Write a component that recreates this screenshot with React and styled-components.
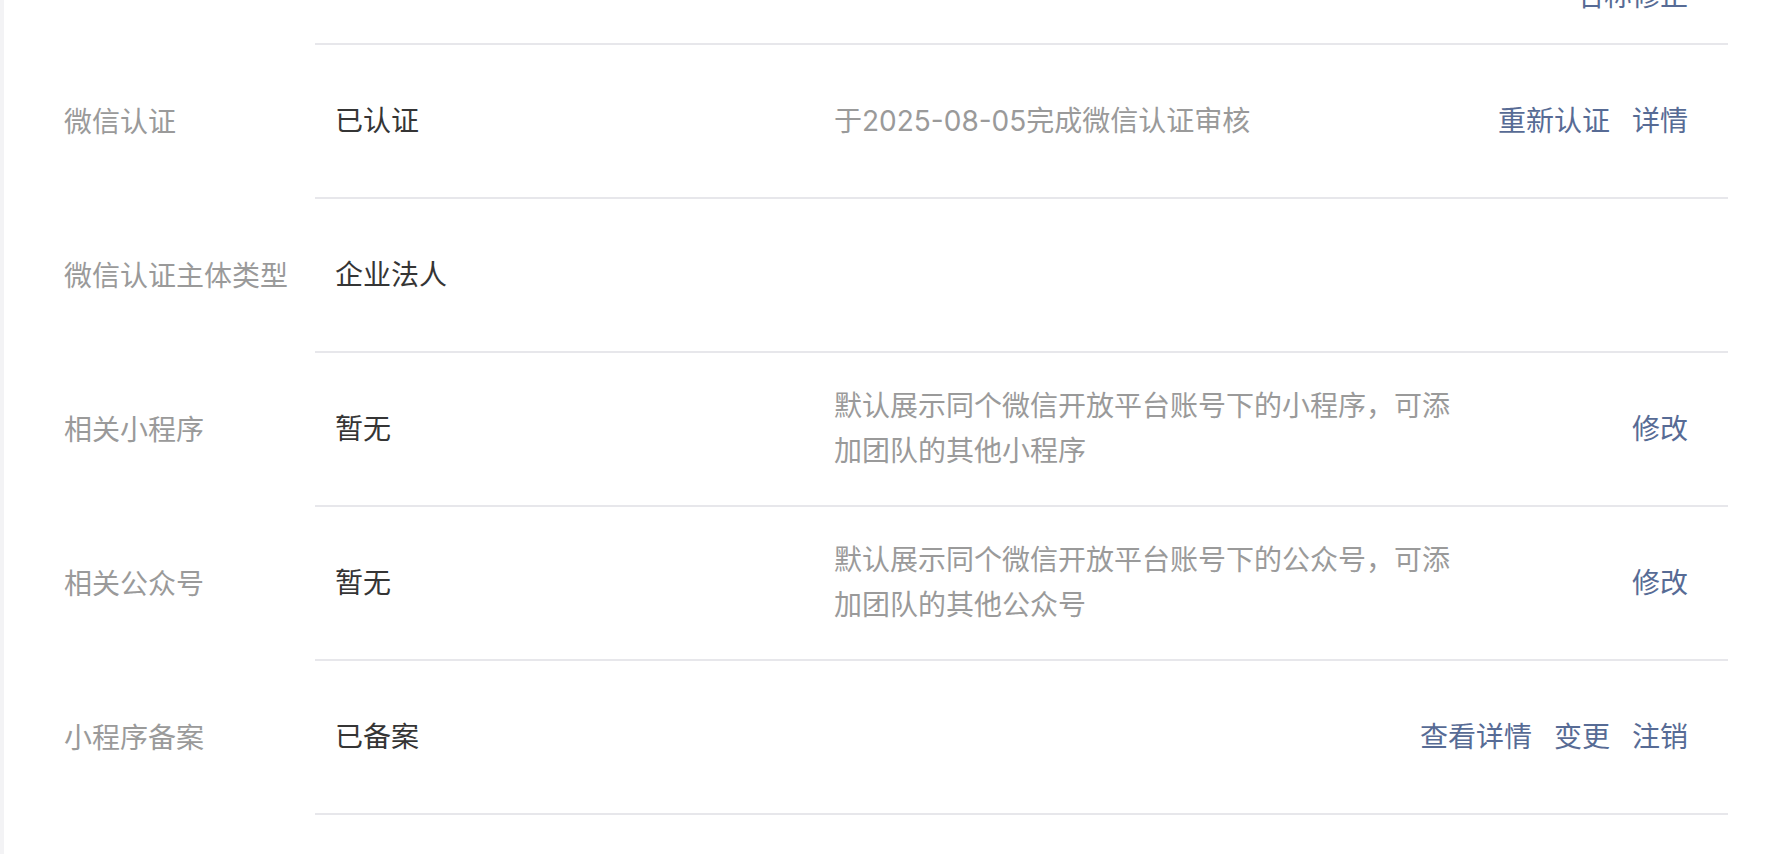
import React from 'react';
import styled, { createGlobalStyle } from 'styled-components';

const GlobalStyle = createGlobalStyle`
  html, body {
    margin: 0;
    padding: 0;
    background: #f3f3f5;
    overflow: hidden;
  }
  body {
    font-family: Inter, "Noto Sans CJK SC", "Noto Sans", sans-serif;
    -webkit-font-smoothing: antialiased;
  }
`;

const Card = styled.main`
  display: flow-root;
  margin-left: 4px;
  min-height: 100vh;
  background: #ffffff;
  padding: 0 46px 0 60px;
  box-sizing: border-box;
`;

const List = styled.section`
  margin-top: -109px;
`;

const Row = styled.div`
  display: flex;
  align-items: stretch;
`;

const Label = styled.div`
  width: 251px;
  flex-shrink: 0;
  display: flex;
  align-items: center;
  color: #9a9a9a;
  font-size: 28px;
  line-height: 45px;
`;

const Content = styled.div`
  flex: 1;
  display: flex;
  align-items: center;
  min-height: 154px;
  padding: 24px 40px 24px 20px;
  box-sizing: border-box;
  border-bottom: 2px solid #e7e7eb;
`;

const Value = styled.div`
  width: 499px;
  flex-shrink: 0;
  color: #353535;
  font-size: 28px;
  line-height: 45px;
`;

const Desc = styled.div`
  width: 620px;
  flex-shrink: 0;
  color: #9a9a9a;
  font-size: 28px;
  line-height: 45px;
`;

const Actions = styled.div`
  margin-left: auto;
  display: flex;
  flex-direction: ${(p) => (p.$stacked ? 'column' : 'row')};
  align-items: flex-end;
  gap: ${(p) => (p.$stacked ? '14px' : '22px')};
`;

const Link = styled.a`
  color: #576b95;
  font-size: 28px;
  line-height: 45px;
  text-decoration: none;
  cursor: pointer;
  white-space: nowrap;
`;

const rows = [
  {
    label: '小程序名称',
    value: '',
    desc: '',
    actions: ['修改', '名称修正'],
    stacked: true,
  },
  {
    label: '微信认证',
    value: '已认证',
    desc: '于2025-08-05完成微信认证审核',
    actions: ['重新认证', '详情'],
  },
  {
    label: '微信认证主体类型',
    value: '企业法人',
    desc: '',
    actions: [],
  },
  {
    label: '相关小程序',
    value: '暂无',
    desc: '默认展示同个微信开放平台账号下的小程序，可添加团队的其他小程序',
    actions: ['修改'],
  },
  {
    label: '相关公众号',
    value: '暂无',
    desc: '默认展示同个微信开放平台账号下的公众号，可添加团队的其他公众号',
    actions: ['修改'],
  },
  {
    label: '小程序备案',
    value: '已备案',
    desc: '',
    actions: ['查看详情', '变更', '注销'],
  },
];

export default function App() {
  return (
    <>
      <GlobalStyle />
      <Card>
        <List>
          {rows.map((r) => (
            <Row key={r.label}>
              <Label>{r.label}</Label>
              <Content>
                <Value>{r.value}</Value>
                {r.desc ? <Desc>{r.desc}</Desc> : null}
                {r.actions.length ? (
                  <Actions $stacked={r.stacked}>
                    {r.actions.map((a) => (
                      <Link key={a}>{a}</Link>
                    ))}
                  </Actions>
                ) : null}
              </Content>
            </Row>
          ))}
        </List>
      </Card>
    </>
  );
}
